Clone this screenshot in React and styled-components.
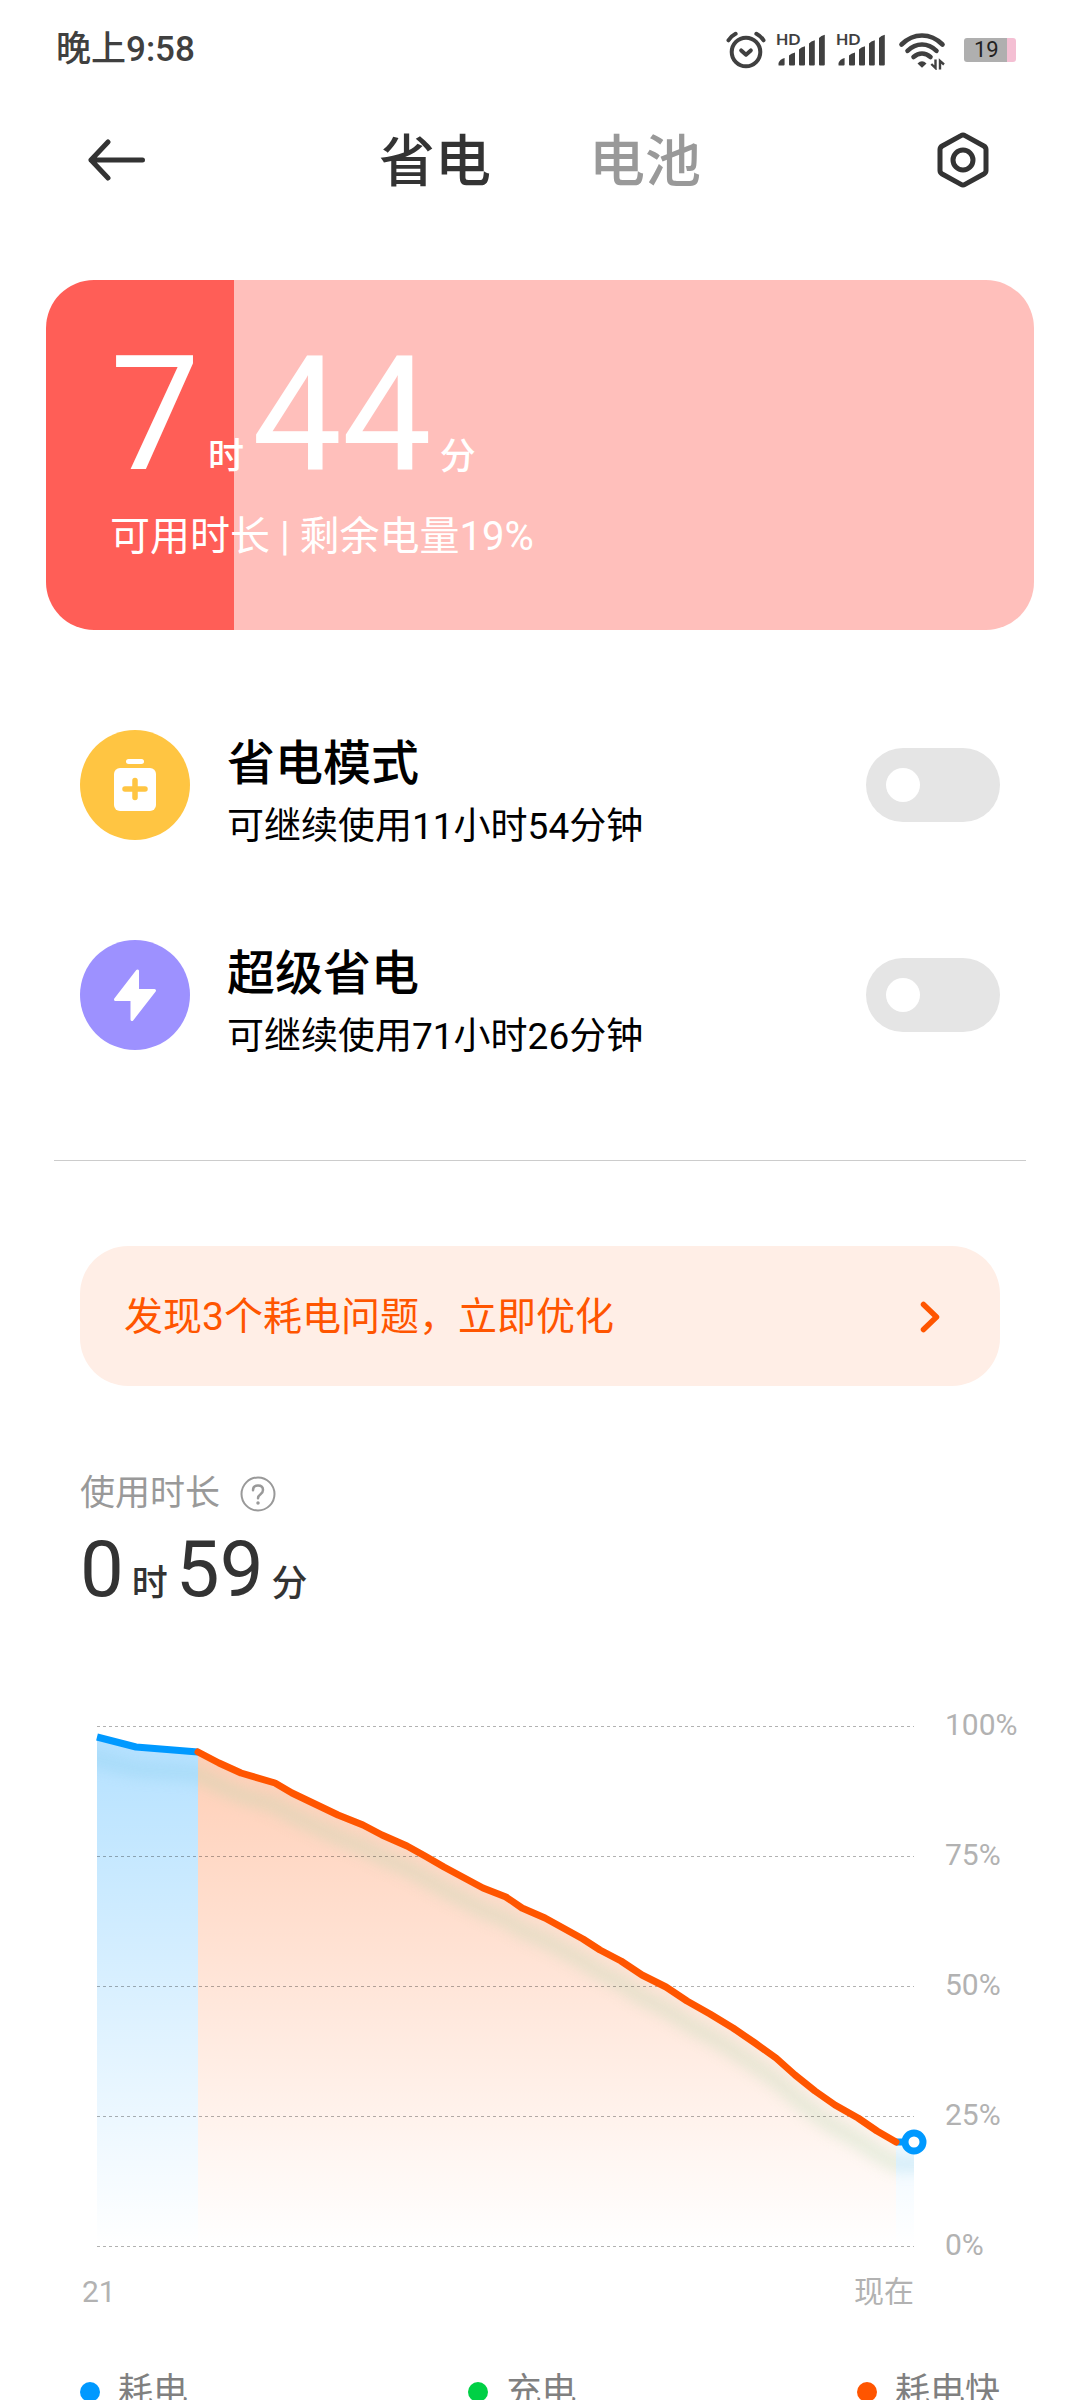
import React, { useState } from "react";
import styled, { createGlobalStyle } from "styled-components";

const GlobalStyle = createGlobalStyle`
  * { box-sizing: border-box; }
  html, body { margin: 0; padding: 0; background: #fff; }
  body {
    font-family: Roboto, "Noto Sans CJK SC", sans-serif;
    color: #000;
  }
  button, input { font: inherit; color: inherit; margin: 0; }
  button { border: 0; padding: 0; background: none; cursor: pointer; }
  h1, h2, p, dl, ul { margin: 0; padding: 0; font-weight: 400; }
  svg { display: block; }
`;

const Screen = styled.div`
  height: 100vh;
  overflow-y: auto;
  scrollbar-width: none;
  background: #fff;
`;

const StatusBar = styled.div`
  display: flex;
  align-items: center;
  justify-content: space-between;
  height: 100px;
  padding: 0 64px 0 56px;
  color: #404040;
`;

const Clock = styled.time`
  font-size: 35px;
  line-height: 40px;
  font-weight: 500;
`;

const StatusIcons = styled.div`
  display: flex;
  align-items: center;
  gap: 10px;
`;

const BatteryBadge = styled.div`
  width: 52px;
  height: 24px;
  border-radius: 3px;
  background: linear-gradient(to right, #afafaf 83%, #f4bfd3 83%);
  color: #222;
  font-size: 22px;
  line-height: 24px;
  padding-left: 10px;
`;

const Header = styled.header`
  display: grid;
  grid-template-columns: 1fr auto 1fr;
  align-items: center;
  height: 120px;
  padding: 0 88px;
`;

const IconButton = styled.button`
  justify-self: ${(p) => p.$side};
  display: block;
`;

const Tabs = styled.nav`
  display: flex;
  gap: 98px;
`;

const Tab = styled.button`
  padding-top: 4px;
  font-size: 56px;
  line-height: 80px;
  font-weight: 500;
  color: ${(p) => (p.$active ? "#333" : "#999")};
`;

const BatteryCard = styled.section`
  margin: 60px 46px 0;
  height: 350px;
  padding: 55px 64px 0;
  border-radius: 48px;
  color: #fff;
  background: linear-gradient(to right, #ff5e57 ${(p) => p.$level}%, #ffbfbb ${(p) => p.$level}%);
`;

const Duration = styled.p`
  display: flex;
  align-items: baseline;
  gap: 8px;
  font-size: ${(p) => (p.$large ? 160 : 78)}px;
  line-height: ${(p) => (p.$large ? 160 : 80)}px;
  color: ${(p) => (p.$large ? "#fff" : "#333")};
`;

const Unit = styled.span`
  font-family: "Noto Sans CJK SC", sans-serif;
  font-size: 36px;
  line-height: 40px;
  font-weight: 500;
`;

const CardNote = styled.p`
  margin-top: 14px;
  font-size: 40px;
  line-height: 56px;
`;

const ModeList = styled.ul`
  display: flex;
  flex-direction: column;
  gap: 100px;
  margin: 100px 80px 0;
  list-style: none;
`;

const ModeRow = styled.li`
  display: flex;
  align-items: center;
  height: 110px;
`;

const ModeIcon = styled.div`
  display: flex;
  align-items: center;
  justify-content: center;
  flex: none;
  width: 110px;
  height: 110px;
  border-radius: 50%;
  background: ${(p) => p.$color};
`;

const ModeText = styled.label`
  flex: 1;
  display: block;
  padding: 16px 0 0 37px;
`;

const ModeTitle = styled.span`
  display: block;
  font-size: 48px;
  line-height: 64px;
  font-weight: 500;
`;

const ModeDetail = styled.span`
  display: block;
  font-size: 37px;
  line-height: 56px;
  margin-top: 3px;
`;

const Switch = styled.input`
  appearance: none;
  flex: none;
  display: flex;
  align-items: center;
  width: 134px;
  height: 74px;
  padding: 0 20px;
  border-radius: 37px;
  background: #e5e5e5;
  cursor: pointer;
  &::before {
    content: "";
    width: 34px;
    height: 34px;
    border-radius: 50%;
    background: #fff;
  }
  &:checked {
    background: #0099ff;
    justify-content: flex-end;
  }
`;

const Divider = styled.hr`
  height: 1px;
  margin: 110px 54px 0;
  border: 0;
  background: #ccc;
`;

const ProblemBanner = styled.a`
  display: flex;
  align-items: center;
  justify-content: space-between;
  height: 140px;
  margin: 85px 80px 0;
  padding: 2px 59px 0 44px;
  border-radius: 48px;
  background: #ffeee6;
  color: #ff5500;
  font-size: 39px;
  line-height: 56px;
  text-decoration: none;
`;

const Usage = styled.section`
  margin: 84px 80px 0;
`;

const UsageTitle = styled.h2`
  display: flex;
  align-items: center;
  gap: 20px;
  font-size: 35px;
  line-height: 48px;
  color: #999;
`;

const UsageTime = styled.div`
  margin-top: 12px;
`;

const Chart = styled.section`
  display: grid;
  grid-template-columns: 1fr 135px;
  column-gap: 31px;
  margin: 97px 0 0 97px;
  color: #b2b2b2;
  font-size: 30px;
  line-height: 36px;
`;

const Plot = styled.div`
  padding: 19px 0 17px;
  svg { width: 100%; height: auto; overflow: visible; }
`;

const Scale = styled.div`
  display: flex;
  flex-direction: column;
  justify-content: space-between;
  white-space: nowrap;
`;

const TimeAxis = styled.div`
  display: flex;
  justify-content: space-between;
  margin: 11px 0 0 -15px;
`;

const Legend = styled.ul`
  display: flex;
  justify-content: space-between;
  margin: 58px 80px 0;
  padding-bottom: 60px;
  list-style: none;
  color: #808080;
  font-size: 35px;
  line-height: 48px;
`;

const LegendItem = styled.li`
  display: flex;
  align-items: center;
  gap: 18px;
  &::before {
    content: "";
    width: 20px;
    height: 20px;
    border-radius: 50%;
    background: ${(p) => p.$color};
  }
`;

const AlarmIcon = () => (
  <svg width="40" height="40" viewBox="0 0 40 40" fill="none" stroke="currentColor" strokeLinecap="round" strokeLinejoin="round" aria-label="闹钟">
    <circle cx="20" cy="22" r="14.3" strokeWidth="4" />
    <path d="M15.2 20.4l4.8 4.3 4.8-4.3" strokeWidth="4" />
    <path d="M2.5 10.3Q5 6.2 9.6 3.8M37.5 10.3Q35 6.2 30.4 3.8" strokeWidth="4" />
  </svg>
);

const SignalIcon = () => (
  <svg width="50" height="44" viewBox="0 -5 50 44" fill="currentColor" aria-label="信号">
    <text x="0" y="12" fontSize="16" fontWeight="700" fontFamily="Lato, sans-serif">HD</text>
    <path d="M2.5 32V30Q4 26 8.600 25V31.500Q8.600 32.500 7.600 32.500H3Q2.500 32.500 2.500 32ZM13 31.500V22.500Q15 20.300 19 19.500V31.500Q19 32.500 18 32.500H14Q13 32.500 13 31.500ZM23 31.500V16.500Q25 14 29 13.200V31.500Q29 32.500 28 32.500H24Q23 32.500 23 31.500ZM33 31.500V10.500Q35 8 38.800 7.200V31.500Q38.800 32.500 37.800 32.500H34Q33 32.500 33 31.500ZM43 31.500V5Q45 2.500 48.800 1.700V31.500Q48.800 32.500 47.800 32.500H44Q43 32.500 43 31.500Z" />
  </svg>
);

const WifiIcon = () => (
  <svg width="58" height="40" viewBox="0 0 58 40" fill="none" stroke="currentColor" strokeWidth="4.6" strokeLinecap="round" aria-label="无线网络">
    <path d="M5.500 14.500Q14.500 5.500 26 5.500T46.500 14.500" />
    <path d="M11.500 20.800Q18 14.500 26 14.500T40.500 20.800" />
    <path d="M17.500 27Q21.500 23.500 26 23.500T34.500 27" />
    <path d="M21.500 33.500Q26 29 30.500 33.500L26 37.800Z" fill="currentColor" stroke="none" />
    <path d="M39.500 29.500v8.500l-4.200-4M44 39.500v-8.500l4 3.500" strokeWidth="2.400" strokeLinecap="butt" />
  </svg>
);

const BackIcon = () => (
  <svg width="58" height="42" viewBox="0 0 58 42" fill="none" stroke="#333" strokeWidth="5" strokeLinecap="round" strokeLinejoin="round">
    <path d="M20 3L3 21l17 18M3 21h51.500" />
  </svg>
);

const SettingsIcon = () => (
  <svg width="56" height="58" viewBox="0 0 56 58" fill="none" stroke="#333" strokeWidth="5" strokeLinejoin="round">
    <path d="M27 4Q28 4 29 4.600L47.800 15Q50 16.300 50 18.500V39.500Q50 41.700 47.800 43L29 53.400Q28 54 27 54T25 53.400L6.200 43Q4 41.700 4 39.500V18.500Q4 16.300 6.200 15L25 4.600Q26 4 27 4Z" />
    <circle cx="27" cy="29" r="10" />
  </svg>
);

const SaverIcon = () => (
  <svg width="42" height="52" viewBox="0 0 42 52">
    <rect x="12" y="0" width="18" height="5" rx="2.500" fill="#fff" />
    <rect x="0" y="9" width="42" height="43" rx="6" fill="#fff" />
    <path d="M21 21.500v17M11 30h20" stroke="#ffc542" strokeWidth="5.500" strokeLinecap="round" />
  </svg>
);

const BoltIcon = () => (
  <svg width="44" height="54" viewBox="0 0 44 54" fill="#fff" stroke="#fff" strokeWidth="3" strokeLinejoin="round">
    <path d="M24.500 3V22.500H41.500L19 51.500V31.500H2.500Z" />
  </svg>
);

const ChevronIcon = () => (
  <svg width="22" height="32" viewBox="0 0 22 32" fill="none" stroke="#ff5500" strokeWidth="5.500" strokeLinecap="round" strokeLinejoin="round">
    <path d="M4.500 3.500L17.500 16 4.500 28.500" />
  </svg>
);

const HelpIcon = () => (
  <svg width="36" height="36" viewBox="0 0 36 36" fill="none" stroke="#999" strokeLinecap="round">
    <circle cx="18" cy="18" r="16.500" strokeWidth="2" />
    <path d="M13 14.200Q13 9.500 18 9.500T23 14Q23 16.300 20.500 18.300Q18 20.200 18 22.300" strokeWidth="2.500" />
    <circle cx="18" cy="27" r="1" strokeWidth="1.500" fill="#999" />
  </svg>
);

const NORMAL = [[0, 11], [39, 21], [101, 26]];
const FAST = [
  [101, 26], [122, 37], [144, 47], [178, 57], [195, 67], [241, 89], [266, 99],
  [285, 109], [310, 120], [328, 130], [347, 141], [386, 162], [409, 171],
  [425, 182], [448, 192], [486, 213], [503, 224], [524, 235], [545, 249],
  [569, 261], [590, 275], [613, 288], [636, 302], [658, 317], [679, 332],
  [698, 349], [718, 365], [738, 379], [761, 392], [780, 405], [799, 416],
];
const TAIL = [[799, 416], [817, 416]];
const BOTTOM = 520;

const line = (points) => "M" + points.map((p) => p.join(" ")).join("L");
const area = (points) =>
  `${line(points)}L${points[points.length - 1][0]} ${BOTTOM}L${points[0][0]} ${BOTTOM}Z`;

const BatteryChart = () => (
  <svg viewBox="0 0 817 520" role="img" aria-label="电量变化">
    <defs>
      <linearGradient id="blue" gradientUnits="userSpaceOnUse" x1="0" y1="0" x2="0" y2="520">
        <stop offset="0" stopColor="#0099ff" stopOpacity="0.3" />
        <stop offset="1" stopColor="#0099ff" stopOpacity="0" />
      </linearGradient>
      <linearGradient id="orange" gradientUnits="userSpaceOnUse" x1="0" y1="0" x2="0" y2="520">
        <stop offset="0" stopColor="#ff5500" stopOpacity="0.3" />
        <stop offset="1" stopColor="#ff5500" stopOpacity="0" />
      </linearGradient>
      <filter id="soft" x="-10%" y="-30%" width="120%" height="160%">
        <feGaussianBlur stdDeviation="7" />
      </filter>
      <clipPath id="blueArea"><path d={area(NORMAL) + area(TAIL)} /></clipPath>
      <clipPath id="orangeArea"><path d={area(FAST)} /></clipPath>
    </defs>
    <path d={area(NORMAL)} fill="url(#blue)" />
    <path d={area(TAIL)} fill="url(#blue)" />
    <path d={area(FAST)} fill="url(#orange)" />
    <g clipPath="url(#orangeArea)">
      <path d={line([...NORMAL, ...FAST, ...TAIL])} transform="translate(0 22)" fill="none" stroke="#afd7ad" strokeWidth="16" opacity="0.3" filter="url(#soft)" />
    </g>
    <g clipPath="url(#blueArea)">
      <path d={line([[-30, 4], ...NORMAL, ...FAST, ...TAIL, [850, 416]])} transform="translate(0 22)" fill="none" stroke="#7cc8e6" strokeWidth="16" opacity="0.25" filter="url(#soft)" />
    </g>
    {[0, 130, 260, 390, 520].map((y) => (
      <path key={y} d={`M0 ${y + 0.5}H817`} stroke="#000" strokeOpacity="0.3" strokeDasharray="3 3" />
    ))}
    <g fill="none" strokeWidth="7" strokeLinejoin="round">
      <path d={line(NORMAL)} stroke="#0099ff" />
      <path d={line(TAIL)} stroke="#0099ff" />
      <path d={line(FAST)} stroke="#ff5500" strokeLinecap="round" />
    </g>
    <circle cx="817" cy="416" r="9" fill="#fff" stroke="#0099ff" strokeWidth="7" />
  </svg>
);

const MODES = [
  { id: "saver", title: "省电模式", detail: "可继续使用11小时54分钟", color: "#ffc542", Icon: SaverIcon },
  { id: "ultra", title: "超级省电", detail: "可继续使用71小时26分钟", color: "#9d91ff", Icon: BoltIcon },
];

export default function App() {
  const [on, setOn] = useState({});
  return (
    <Screen>
      <GlobalStyle />
      <StatusBar>
        <Clock>晚上9:58</Clock>
        <StatusIcons>
          <AlarmIcon />
          <SignalIcon />
          <SignalIcon />
          <WifiIcon />
          <BatteryBadge>19</BatteryBadge>
        </StatusIcons>
      </StatusBar>

      <Header>
        <IconButton $side="start" aria-label="返回"><BackIcon /></IconButton>
        <Tabs>
          <Tab $active>省电</Tab>
          <Tab>电池</Tab>
        </Tabs>
        <IconButton $side="end" aria-label="设置"><SettingsIcon /></IconButton>
      </Header>

      <main>
        <BatteryCard $level={19}>
          <Duration $large>
            <span>7</span><Unit>时</Unit><span>44</span><Unit>分</Unit>
          </Duration>
          <CardNote>可用时长 | 剩余电量19%</CardNote>
        </BatteryCard>

        <ModeList>
          {MODES.map(({ id, title, detail, color, Icon }) => (
            <ModeRow key={id}>
              <ModeIcon $color={color}><Icon /></ModeIcon>
              <ModeText htmlFor={id}>
                <ModeTitle>{title}</ModeTitle>
                <ModeDetail>{detail}</ModeDetail>
              </ModeText>
              <Switch
                id={id}
                type="checkbox"
                role="switch"
                checked={!!on[id]}
                onChange={(e) => setOn({ ...on, [id]: e.target.checked })}
              />
            </ModeRow>
          ))}
        </ModeList>

        <Divider />

        <ProblemBanner href="#optimize">
          <span>发现3个耗电问题，立即优化</span>
          <ChevronIcon />
        </ProblemBanner>

        <Usage>
          <UsageTitle>
            使用时长
            <IconButton $side="start" aria-label="说明"><HelpIcon /></IconButton>
          </UsageTitle>
          <UsageTime>
            <Duration>
              <span>0</span><Unit>时</Unit><span>59</span><Unit>分</Unit>
            </Duration>
          </UsageTime>
        </Usage>

        <Chart>
          <Plot><BatteryChart /></Plot>
          <Scale>
            <span>100%</span>
            <span>75%</span>
            <span>50%</span>
            <span>25%</span>
            <span>0%</span>
          </Scale>
          <TimeAxis>
            <span>21</span>
            <span>现在</span>
          </TimeAxis>
        </Chart>

        <Legend>
          <LegendItem $color="#0099ff">耗电</LegendItem>
          <LegendItem $color="#00d045">充电</LegendItem>
          <LegendItem $color="#ff5500">耗电快</LegendItem>
        </Legend>
      </main>
    </Screen>
  );
}
